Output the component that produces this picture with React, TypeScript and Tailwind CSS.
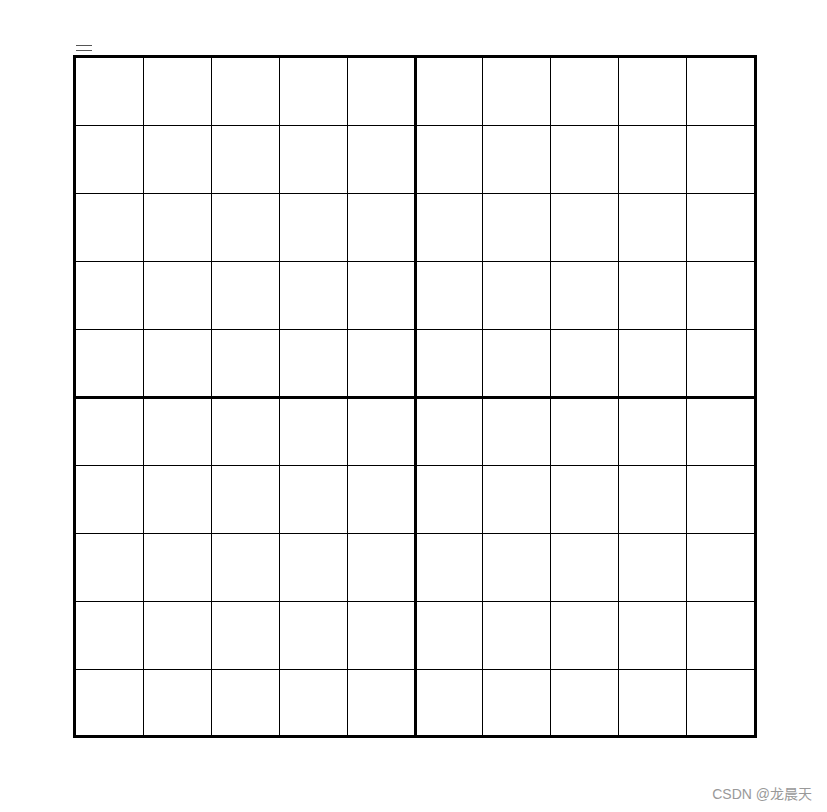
import React from "react"

const ROW_TOP = "grid-rows-[67px_67px_67px_67px_66px]"
const ROW_BOTTOM = "grid-rows-[66px_67px_67px_67px_65px]"
const COL_LEFT = "grid-cols-[67px_67px_67px_67px_66px]"
const COL_RIGHT = "grid-cols-[65px_67px_67px_67px_67px]"

function Quadrant({ cols, rows }: { cols: string; rows: string }) {
  return (
    <div className={`grid gap-px ${cols} ${rows}`}>
      {Array.from({ length: 25 }).map((_, i) => (
        <div key={i} className="bg-white" />
      ))}
    </div>
  )
}

export default function App() {
  return (
    <div className="relative h-[812px] w-[827px] bg-white font-['Liberation_Sans',sans-serif]">
      {/* little equals mark */}
      <div className="pl-[76px] pt-[45px]">
        <div className="flex w-[16px] flex-col gap-[4px]">
          <div className="h-px bg-[#555]" />
          <div className="h-px bg-[#555]" />
        </div>
      </div>

      {/* 10x10 board */}
      <div className="ml-[73px] mt-[4px] inline-grid grid-cols-[338px_337px] gap-[3px] bg-black p-[3px]">
        <Quadrant cols={COL_LEFT} rows={ROW_TOP} />
        <Quadrant cols={COL_RIGHT} rows={ROW_TOP} />
        <Quadrant cols={COL_LEFT} rows={ROW_BOTTOM} />
        <Quadrant cols={COL_RIGHT} rows={ROW_BOTTOM} />
      </div>

      {/* watermark */}
      <div className="absolute bottom-[7px] right-[15px] text-[14px] text-[#999] font-['Liberation_Sans','Noto_Sans_CJK_SC',sans-serif]">
        CSDN @龙晨天
      </div>
    </div>
  )
}
